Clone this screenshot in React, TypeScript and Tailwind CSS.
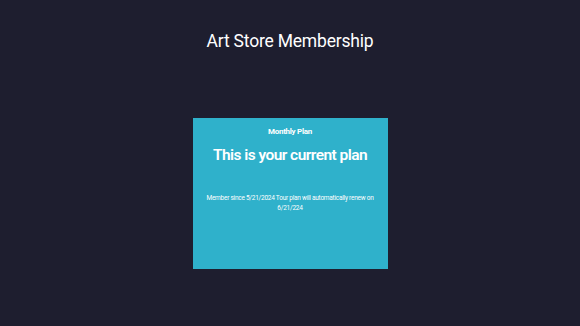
export default function App() {
  return (
    <div
      className="min-h-[326px] w-full bg-[#1e1e2f] flex flex-col items-center pt-[27px] text-white"
      style={{ fontFamily: 'Roboto, "Liberation Sans", sans-serif' }}
    >
      <h1 className="text-[17.5px] leading-[28px] font-normal tracking-[-0.2px]">Art Store Membership</h1>

      <div className="mt-[63px] w-[195px] h-[151px] bg-[#2fb1cb] flex flex-col items-center px-[12px] pt-[8px] text-center">
        <p className="text-[8px] leading-[12px] font-bold tracking-[-0.3px]">Monthly Plan</p>
        <h2 className="mt-[7px] text-[15.5px] leading-[20px] font-semibold tracking-[-0.55px]">
          This is your current plan
        </h2>
        <p className="mt-[28px] text-[6.5px] leading-[10px] tracking-[-0.25px]">
          Member since 5/21/2024 Tour plan will automatically renew on 6/21/224
        </p>
      </div>
    </div>
  );
}
